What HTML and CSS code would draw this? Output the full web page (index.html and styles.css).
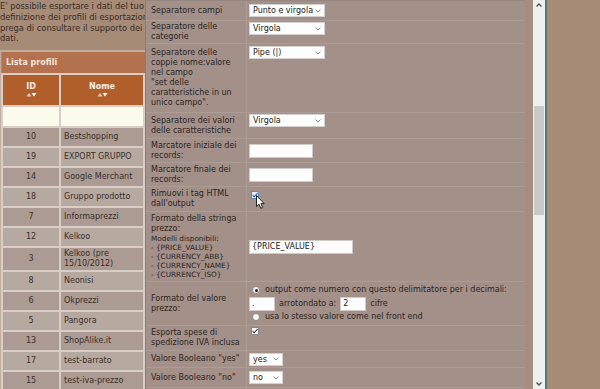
FILE: index.html
```html
<!DOCTYPE html>
<html lang="it">
<head>
<meta charset="utf-8">
<title>Profili di esportazione</title>
<link rel="stylesheet" href="styles.css">
</head>
<body>
<div class="page">
  <p class="intro">E' possibile esportare i dati del tuo<br>definizione dei profili di esportazione<br>prega di consultare il supporto dei<br>dati.</p>
  <div class="box">
    <div class="box-title">Lista profili</div>
    <table class="list">
      <thead>
        <tr>
          <th class="c-id">ID<span class="sort"><svg width="11" height="5" viewBox="0 0 11 5"><path d="M0.5 4.5 L3 1 L5.5 4.5 Z" fill="#dccbc0"/><path d="M5.5 1 L10.5 1 L8 4.5 Z" fill="#fff"/></svg></span></th>
          <th class="c-name">Nome<span class="sort"><svg width="11" height="5" viewBox="0 0 11 5"><path d="M0.5 4.5 L3 1 L5.5 4.5 Z" fill="#dccbc0"/><path d="M5.5 1 L10.5 1 L8 4.5 Z" fill="#fff"/></svg></span></th>
        </tr>
        <tr class="filter"><td></td><td></td></tr>
      </thead>
      <tbody>
        <tr><td>10</td><td>Bestshopping</td></tr>
        <tr><td>19</td><td>EXPORT GRUPPO</td></tr>
        <tr><td>14</td><td>Google Merchant</td></tr>
        <tr><td>18</td><td>Gruppo prodotto</td></tr>
        <tr><td>7</td><td>Informaprezzi</td></tr>
        <tr><td>12</td><td>Kelkoo</td></tr>
        <tr class="tall"><td>3</td><td>Kelkoo (pre 15/10/2012)</td></tr>
        <tr><td>8</td><td>Neonisi</td></tr>
        <tr><td>6</td><td>Okprezzi</td></tr>
        <tr><td>5</td><td>Pangora</td></tr>
        <tr><td>13</td><td>ShopAlike.it</td></tr>
        <tr><td>17</td><td>test-barrato</td></tr>
        <tr><td>15</td><td>test-iva-prezzo</td></tr>
      </tbody>
    </table>
  </div>
</div>

<div class="modal">
  <div class="form">
    <div class="row r1">
      <div class="lbl">Separatore campi</div>
      <div class="val"><div class="sel w76">Punto e virgola<svg class="chev" width="6" height="4" viewBox="0 0 6 4"><path d="M0.5 0.5 L3 3 L5.5 0.5" stroke="#8a8a8a" fill="none"/></svg></div></div>
    </div>
    <div class="row r2">
      <div class="lbl">Separatore delle<br>categorie</div>
      <div class="val top"><div class="sel w76">Virgola<svg class="chev" width="6" height="4" viewBox="0 0 6 4"><path d="M0.5 0.5 L3 3 L5.5 0.5" stroke="#8a8a8a" fill="none"/></svg></div></div>
    </div>
    <div class="row r3">
      <div class="lbl">Separatore delle<br>coppie nome:valore<br>nel campo<br>"set delle<br>caratteristiche in un<br>unico campo".</div>
      <div class="val top top2"><div class="sel w76">Pipe (|)<svg class="chev" width="6" height="4" viewBox="0 0 6 4"><path d="M0.5 0.5 L3 3 L5.5 0.5" stroke="#8a8a8a" fill="none"/></svg></div></div>
    </div>
    <div class="row r4">
      <div class="lbl">Separatore dei valori<br>delle caratteristiche</div>
      <div class="val top"><div class="sel w76">Virgola<svg class="chev" width="6" height="4" viewBox="0 0 6 4"><path d="M0.5 0.5 L3 3 L5.5 0.5" stroke="#8a8a8a" fill="none"/></svg></div></div>
    </div>
    <div class="row r5">
      <div class="lbl">Marcatore iniziale dei<br>records:</div>
      <div class="val"><div class="inp w64"></div></div>
    </div>
    <div class="row r6">
      <div class="lbl">Marcatore finale dei<br>records:</div>
      <div class="val"><div class="inp w64"></div></div>
    </div>
    <div class="row r7">
      <div class="lbl">Rimuovi i tag HTML<br>dall'output</div>
      <div class="val top chk-top"><span class="chk hover"><svg width="8" height="8" viewBox="0 0 8 8"><path d="M1.5 4.2 L3.2 5.8 L6.6 2" stroke="#2f5f9e" stroke-width="1.1" fill="none"/></svg></span></div>
    </div>
    <div class="row r8">
      <div class="lbl"><div>Formato della stringa<br>prezzo:<div class="note">Modelli disponibili:<br>- {PRICE_VALUE}<br>- {CURRENCY_ABB}<br>- {CURRENCY_NAME}<br>- {CURRENCY_ISO}</div></div></div>
      <div class="val"><div class="inp w104">{PRICE_VALUE}</div></div>
    </div>
    <div class="row r9">
      <div class="lbl">Formato del valore<br>prezzo:</div>
      <div class="val">
        <div class="opts">
          <div class="opt"><span class="radio on"></span>output come numero con questo delimitatore per i decimali:</div>
          <div class="opt mid"><div class="inp w26">.</div><span class="txt">arrotondato a:</span><div class="inp w26">2</div><span class="txt">cifre</span></div>
          <div class="opt"><span class="radio"></span>usa lo stesso valore come nel front end</div>
        </div>
      </div>
    </div>
    <div class="row r10">
      <div class="lbl">Esporta spese di<br>spedizione IVA inclusa</div>
      <div class="val top chk-top2"><span class="chk"><svg width="8" height="8" viewBox="0 0 8 8"><path d="M1.5 4.2 L3.2 5.8 L6.6 2" stroke="#333" stroke-width="1.1" fill="none"/></svg></span></div>
    </div>
    <div class="row r11">
      <div class="lbl">Valore Booleano "yes"</div>
      <div class="val"><div class="sel w34">yes<svg class="chev" width="6" height="4" viewBox="0 0 6 4"><path d="M0.5 0.5 L3 3 L5.5 0.5" stroke="#8a8a8a" fill="none"/></svg></div></div>
    </div>
    <div class="row r12">
      <div class="lbl">Valore Booleano "no"</div>
      <div class="val"><div class="sel w34">no<svg class="chev" width="6" height="4" viewBox="0 0 6 4"><path d="M0.5 0.5 L3 3 L5.5 0.5" stroke="#8a8a8a" fill="none"/></svg></div></div>
    </div>
    <div class="row r13">
      <div class="lbl"></div>
      <div class="val top"><div class="sel w34"></div></div>
    </div>
  </div>
  <div class="gutter"></div>
  <div class="scrollbar">
    <svg class="arrow" width="12" height="10" viewBox="0 0 12 10"><path d="M3.5 6.5 L6 4 L8.5 6.5" stroke="#555" stroke-width="1.4" fill="none"/></svg>
    <div class="track"><div class="thumb"></div></div>
    <svg class="arrow" width="12" height="10" viewBox="0 0 12 10"><path d="M3.5 3.5 L6 6 L8.5 3.5" stroke="#555" stroke-width="1.4" fill="none"/></svg>
  </div>
</div>

<svg class="cursor" width="10" height="15" viewBox="0 0 10 15"><path d="M0.5 0.5 L0.5 11.5 L3 9.2 L4.8 13.3 L6.6 12.5 L4.9 8.6 L8.2 8.6 Z" fill="#fff" stroke="#222" stroke-width="1"/></svg>
</body>
</html>
```

FILE: styles.css
```css
html, body {
  margin: 0;
  padding: 0;
}
body {
  width: 600px;
  height: 389px;
  overflow: hidden;
  background: #a68b77;
  font-family: "DejaVu Sans", Verdana, sans-serif;
  position: relative;
}

/* background page */
.page {
  padding-top: 1px;
}
.intro {
  margin: 0;
  width: 145px;
  overflow: hidden;
  font-size: 8.3px;
  line-height: 10.8px;
  color: #3a2b22;
  white-space: nowrap;
}
.box {
  margin-top: 6px;
  border-top: 2px solid #c2ae9f;
  border-left: 1px solid #c2ae9f;
  width: 420px;
}
.box-title {
  margin-left: 1px;
  height: 21px;
  background: #b3714d;
  color: #f3e6dc;
  font-weight: bold;
  font-size: 8px;
  line-height: 21px;
  padding-left: 4px;
}
.list {
  border-collapse: separate;
  border-spacing: 2px;
  background: #d8cec7;
  font-size: 8px;
  color: #3a302b;
  table-layout: fixed;
  width: 144px;
}
.list th {
  background: #b05f2b;
  color: #f8eee6;
  font-weight: bold;
  height: 30px;
  padding: 0;
  text-align: center;
  vertical-align: middle;
  line-height: 9px;
}
.list .c-id { width: 56px; }
.sort {
  display: block;
  height: 6px;
  margin-top: 1px;
}
.sort svg { display: inline-block; vertical-align: top; }
.list .filter td {
  background: #fbfbec;
  height: 19px;
  padding: 0;
}
.list tbody td {
  height: 18px;
  padding: 0 3px;
  line-height: 10px;
  background: #ab9b92;
}
.list tbody tr:nth-child(even) td {
  background: #b6a9a0;
}
.list tbody td:first-child {
  text-align: center;
}
.list tbody tr.tall td {
  height: 22px;
}

/* modal dialog */
.modal {
  position: absolute;
  left: 145px;
  top: 0;
  height: 389px;
  display: flex;
  border-left: 1px solid #8b7d76;
}
.form {
  width: 379px;
  background: #a39189;
  border-top: 1px solid #958680;
  color: #2c2420;
  font-size: 8px;
  line-height: 10px;
}
.row {
  display: flex;
  box-sizing: border-box;
  border-bottom: 1px solid #ab9d95;
}
.r1 { height: 20px; }
.r2 { height: 23px; }
.r3 { height: 69px; }
.r4 { height: 26px; }
.r5 { height: 24px; }
.r6 { height: 24px; }
.r7 { height: 25px; }
.r8 { height: 70px; }
.r9 { height: 44px; }
.r10 { height: 25px; }
.r11 { height: 17px; }
.r12 { height: 20px; }
.r13 { height: 20px; }
.lbl {
  width: 101px;
  box-sizing: border-box;
  border-right: 1px solid #ab9d95;
  padding-left: 5px;
  display: flex;
  align-items: center;
  white-space: nowrap;
}
.note {
  font-size: 7.3px;
  line-height: 9px;
}
.val {
  flex: 1;
  display: flex;
  align-items: center;
  padding-left: 2px;
}
.val.top {
  align-items: flex-start;
  padding-top: 1px;
}
.val.top2 {
  padding-top: 2px;
}
.val.chk-top {
  padding-top: 4px;
}
.val.chk-top2 {
  padding-top: 1px;
}
.sel {
  height: 13px;
  box-sizing: border-box;
  background: #fdfdfd;
  border: 1px solid #d6d2cf;
  color: #222;
  padding-left: 3px;
  line-height: 11px;
  display: flex;
  align-items: center;
  justify-content: space-between;
  padding-right: 3px;
}
.w76 { width: 76px; }
.w34 { width: 34px; }
.w64 { width: 64px; }
.w104 { width: 104px; }
.w26 { width: 26px; }
.inp {
  height: 14px;
  box-sizing: border-box;
  background: #fdfdfd;
  border: 1px solid #d0cbc8;
  color: #222;
  padding-left: 2px;
  line-height: 12px;
}
.chk {
  margin-left: 2px;
  width: 8px;
  height: 8px;
  box-sizing: border-box;
  border: 1px solid #8a8a8a;
  background: #f6f6f6;
  display: inline-flex;
}
.chk svg { margin: -1px; }
.chk.hover {
  border-color: #5b8fc9;
  background: #dde9f6;
}
.opts {
  display: flex;
  flex-direction: column;
}
.opt {
  display: flex;
  align-items: center;
  height: 12px;
  white-space: nowrap;
}
.opt.mid {
  height: 15px;
}
.txt {
  margin: 0 4px;
}
.radio {
  width: 8px;
  height: 8px;
  box-sizing: border-box;
  border-radius: 50%;
  border: 1px solid #888;
  background: #f8f8f8;
  margin-left: 3px;
  margin-right: 5px;
  position: relative;
}
.radio.on::after {
  content: "";
  position: absolute;
  left: 1.5px;
  top: 1.5px;
  width: 3px;
  height: 3px;
  border-radius: 50%;
  background: #222;
}
.gutter {
  width: 8px;
  background: #a68e7e;
}
.scrollbar {
  width: 12px;
  background: #eef0f0;
  border-right: 2px solid #5c757b;
  display: flex;
  flex-direction: column;
}
.arrow {
  display: block;
}
.track {
  flex: 1;
}
.thumb {
  margin-top: 96px;
  margin-left: 1px;
  width: 10px;
  height: 109px;
  background: #c9c9c9;
}
.cursor {
  position: absolute;
  left: 256px;
  top: 195px;
}
```
